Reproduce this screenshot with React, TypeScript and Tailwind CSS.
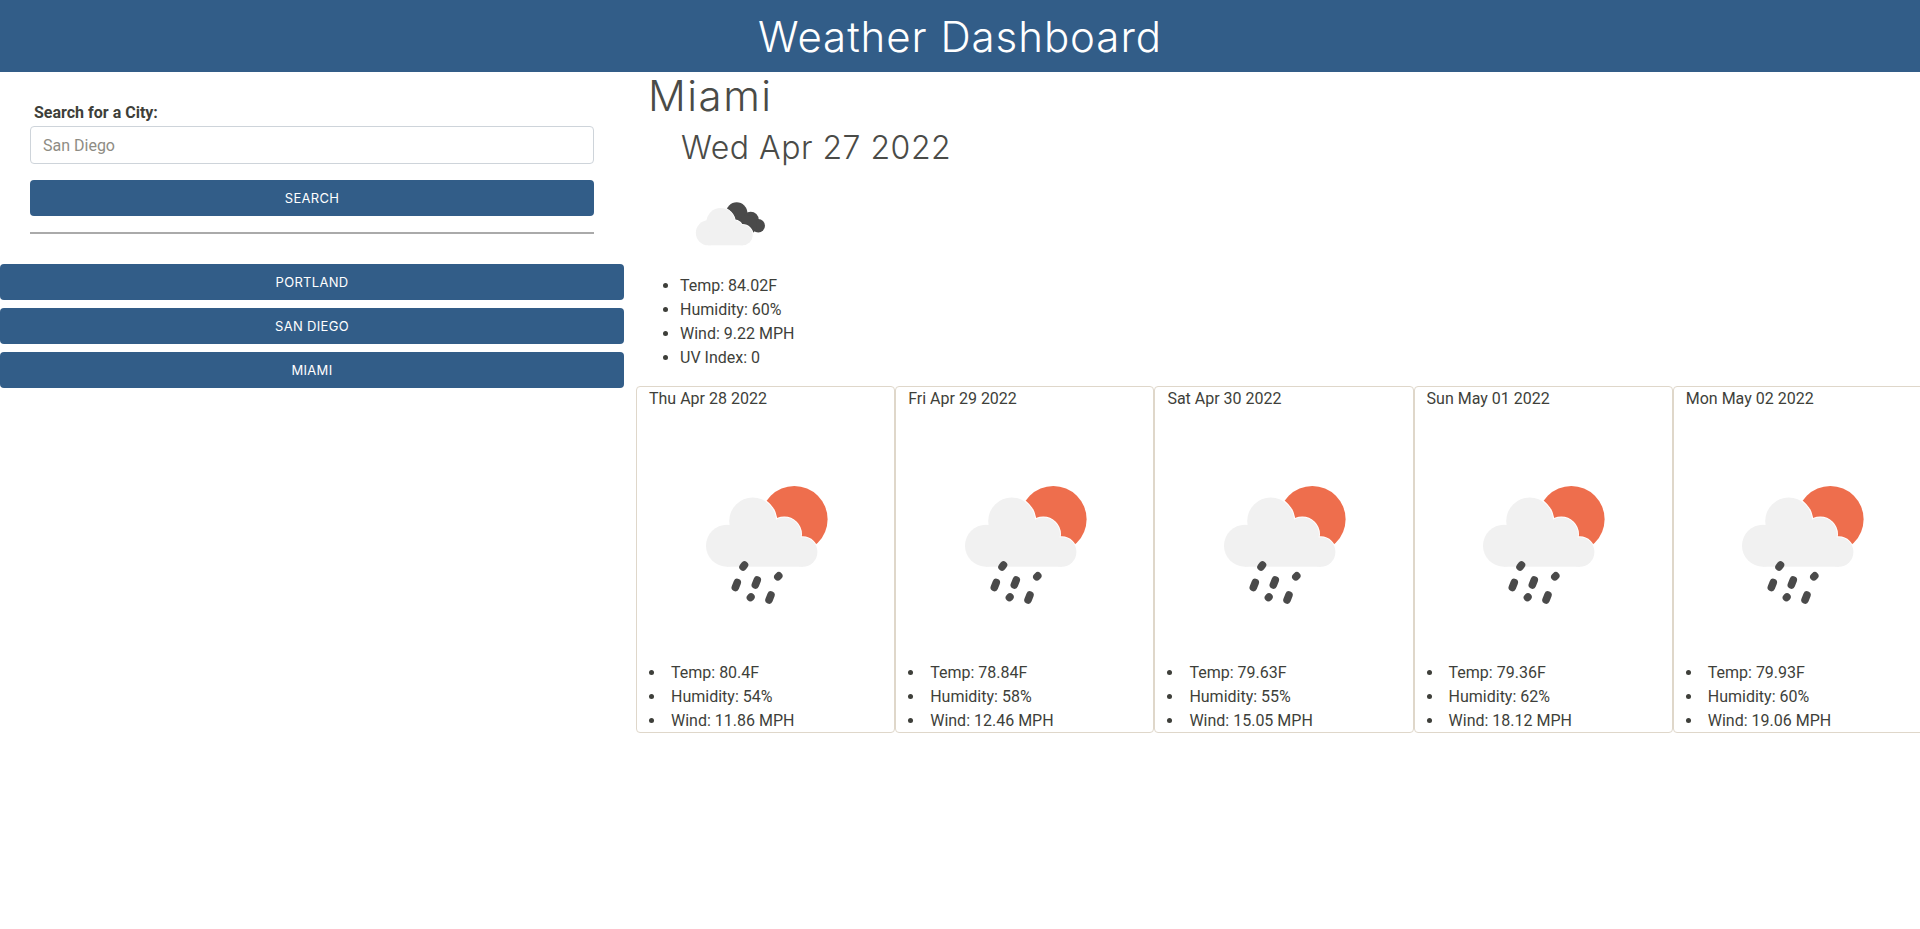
const forecast = [
  { date: "Thu Apr 28 2022", temp: "80.4F", humidity: "54%", wind: "11.86 MPH" },
  { date: "Fri Apr 29 2022", temp: "78.84F", humidity: "58%", wind: "12.46 MPH" },
  { date: "Sat Apr 30 2022", temp: "79.63F", humidity: "55%", wind: "15.05 MPH" },
  { date: "Sun May 01 2022", temp: "79.36F", humidity: "62%", wind: "18.12 MPH" },
  { date: "Mon May 02 2022", temp: "79.93F", humidity: "60%", wind: "19.06 MPH" },
];

const cities = ["Portland", "San Diego", "Miami"];

function BigCloud({ fill, halo }: { fill: string; halo?: boolean }) {
  const stroke = halo ? { stroke: "#fff", strokeWidth: 2 } : {};
  return (
    <g fill={fill} {...stroke}>
      <circle cx="61" cy="104.7" r="21" />
      <circle cx="86.7" cy="80" r="23.5" />
      <circle cx="118.3" cy="93.3" r="16.7" />
      <circle cx="136.7" cy="111" r="14.7" />
      <circle cx="105" cy="100" r="12" />
      <rect x="61" y="100" width="76" height="25.7" />
    </g>
  );
}

function RainIcon() {
  return (
    <svg width="200" height="200" viewBox="0 0 200 200" className="blur-[0.7px]">
      <circle cx="128.3" cy="78.3" r="33.3" fill="#ee6e4d" />
      <BigCloud fill="#fff" halo />
      <BigCloud fill="#f1f1f1" />
      <g stroke="#4a4a4a" strokeWidth="7.5" strokeLinecap="round">
        <line x1="78.5" y1="124" x2="77" y2="126" />
        <line x1="112.8" y1="134.8" x2="111.8" y2="135.8" />
        <line x1="85" y1="156" x2="84.4" y2="156.6" />
        <line x1="71.3" y1="141.5" x2="69.3" y2="146.5" />
        <line x1="91.3" y1="139" x2="89.3" y2="144" />
        <line x1="105" y1="154" x2="103" y2="159" />
      </g>
    </svg>
  );
}

function SmallCloud({ fill, halo }: { fill: string; halo?: boolean }) {
  const stroke = halo ? { stroke: "#fff", strokeWidth: 1.5 } : {};
  return (
    <g fill={fill} {...stroke}>
      <circle cx="28.3" cy="58.8" r="12.5" />
      <circle cx="40.7" cy="48.3" r="14.3" />
      <circle cx="54" cy="55" r="9" />
      <circle cx="62.5" cy="61" r="10.3" />
      <rect x="28" y="60" width="35" height="11.3" />
    </g>
  );
}

function NightCloudIcon() {
  return (
    <svg width="100" height="100" viewBox="0 0 100 100" className="blur-[0.4px]">
      <g fill="#4a4a4a">
        <circle cx="56.7" cy="39" r="10.7" />
        <circle cx="70.7" cy="45.7" r="8" />
        <circle cx="78.3" cy="51.7" r="6.7" />
        <circle cx="67" cy="51" r="10" />
      </g>
      <SmallCloud fill="#fff" halo />
      <SmallCloud fill="#f1f1f1" />
    </svg>
  );
}

function ActionButton({ label, className }: { label: string; className?: string }) {
  return (
    <button className={`h-9 rounded bg-[#325d88] pt-px text-[13px] uppercase tracking-[0.3px] text-white font-[Inter,sans-serif] ${className ?? ""}`}>
      {label}
    </button>
  );
}

export default function App() {
  return (
    <div className="min-h-[929px] w-full overflow-hidden bg-white font-[Roboto,sans-serif] text-base text-[#3e3f3a]">
      <header className="flex h-[72px] items-center justify-center bg-[#325d88]">
        <h1 className="font-[Inter,sans-serif] text-[42px] font-light tracking-[0.95px] text-white">Weather Dashboard</h1>
      </header>

      <div className="flex">
        {/* Search + history */}
        <aside className="w-[624px] shrink-0">
          <div className="flex flex-col px-[30px] pt-[29px]">
            <label className="pl-1 font-bold leading-6">Search for a City:</label>
            <input
              placeholder="San Diego"
              className="mt-px h-[38px] rounded border border-[#ced4da] px-3 placeholder:text-[#8e8c84]"
            />
            <ActionButton label="Search" className="mt-4" />
            <hr className="mt-4 border-t-2 border-[#aaaaaa]" />
          </div>
          <div className="mt-[30px] flex flex-col gap-2">
            {cities.map((city) => (
              <ActionButton key={city} label={city} />
            ))}
          </div>
        </aside>

        {/* Current + forecast */}
        <main className="min-w-0 flex-1 pl-3">
          <h2 className="pl-3 pt-px font-[Inter,sans-serif] text-[42px] font-light leading-[46px] tracking-[1.5px] text-[#4a4b47]">Miami</h2>
          <h3 className="mt-[10px] pl-[45px] font-[Inter,sans-serif] text-[32px] font-light leading-[38px] tracking-[0.5px] text-[#4a4b47]">Wed Apr 27 2022</h3>
          <div className="ml-[44px] mt-[7px]">
            <NightCloudIcon />
          </div>
          <ul className="list-disc pb-4 pl-[44px] leading-6">
            <li>Temp: 84.02F</li>
            <li>Humidity: 60%</li>
            <li>Wind: 9.22 MPH</li>
            <li>UV Index: 0</li>
          </ul>

          <div className="flex">
            {forecast.map((day) => (
              <div key={day.date} className="h-[347px] w-[259.2px] shrink-0 overflow-hidden rounded border border-[#dfd7ca] px-3 leading-6">
                <p>{day.date}</p>
                <div className="flex h-[250px] items-center justify-center pt-[9px]">
                  <RainIcon />
                </div>
                <ul className="list-inside list-disc">
                  <li>Temp: {day.temp}</li>
                  <li>Humidity: {day.humidity}</li>
                  <li>Wind: {day.wind}</li>
                </ul>
              </div>
            ))}
          </div>
        </main>
      </div>
    </div>
  );
}
